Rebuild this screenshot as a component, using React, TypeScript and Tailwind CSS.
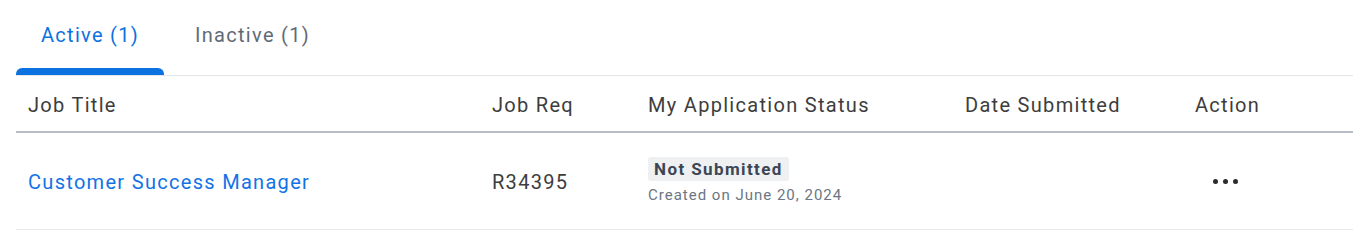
import { useState } from "react";

const cols = "grid grid-cols-[464px_156px_317px_230px_1fr]";

export default function App() {
  const [tab, setTab] = useState<"active" | "inactive">("active");

  return (
    <div className="min-h-screen bg-white pl-4 pr-[13px] font-['Roboto',sans-serif]">
      {/* tabs */}
      <div className="flex border-b border-[#e3e5e8]">
        <button
          onClick={() => setTab("active")}
          className={`relative h-[75px] w-[148px] pb-[5px] text-[20px] tracking-[1.3px] ${tab === "active" ? "text-[#0b72e0]" : "text-[#5f6b77]"}`}
        >
          Active (1)
          {tab === "active" && (
            <span className="absolute bottom-0 left-0 right-0 h-[7px] rounded-t-[6px] bg-[#0b72e0]" />
          )}
        </button>
        <button
          onClick={() => setTab("inactive")}
          className={`relative ml-[6px] h-[75px] px-[25px] pb-[5px] text-[20px] tracking-[1.3px] ${tab === "inactive" ? "text-[#0b72e0]" : "text-[#5f6b77]"}`}
        >
          Inactive (1)
          {tab === "inactive" && (
            <span className="absolute bottom-0 left-0 right-0 h-[7px] rounded-t-[6px] bg-[#0b72e0]" />
          )}
        </button>
      </div>

      {/* header */}
      <div className={`${cols} h-[57px] items-center border-b-2 border-[#b6bdc6] pl-3 pt-[3px] text-[20px] tracking-[1.3px] text-[#3d3d3d]`}>
        <div>Job Title</div>
        <div>Job Req</div>
        <div>My Application Status</div>
        <div>Date Submitted</div>
        <div>Action</div>
      </div>

      {/* row */}
      <div className={`${cols} h-[97px] items-center border-b border-[#e8e9eb] pl-3`}>
        <a href="#" className="pt-[1px] text-[20px] tracking-[1.3px] text-[#1273e6]">Customer Success Manager</a>
        <div className="pt-[1px] text-[20px] tracking-[1.3px] text-[#3d3d3d]">R34395</div>
        <div className="flex flex-col items-start pt-[2px]">
          <span className="rounded-[3px] bg-[#eef0f2] px-[6px] py-[1px] text-[17px] font-bold leading-[22px] tracking-[1.4px] text-[#3b4652]">
            Not Submitted
          </span>
          <span className="mt-[3px] text-[15px] tracking-[1px] text-[#6b7682]">Created on June 20, 2024</span>
        </div>
        <div />
        <div className="flex items-center gap-[5px] pl-[18px]">
          <span className="h-[5px] w-[5px] rounded-full bg-[#2b2b2b]" />
          <span className="h-[5px] w-[5px] rounded-full bg-[#2b2b2b]" />
          <span className="h-[5px] w-[5px] rounded-full bg-[#2b2b2b]" />
        </div>
      </div>
    </div>
  );
}
